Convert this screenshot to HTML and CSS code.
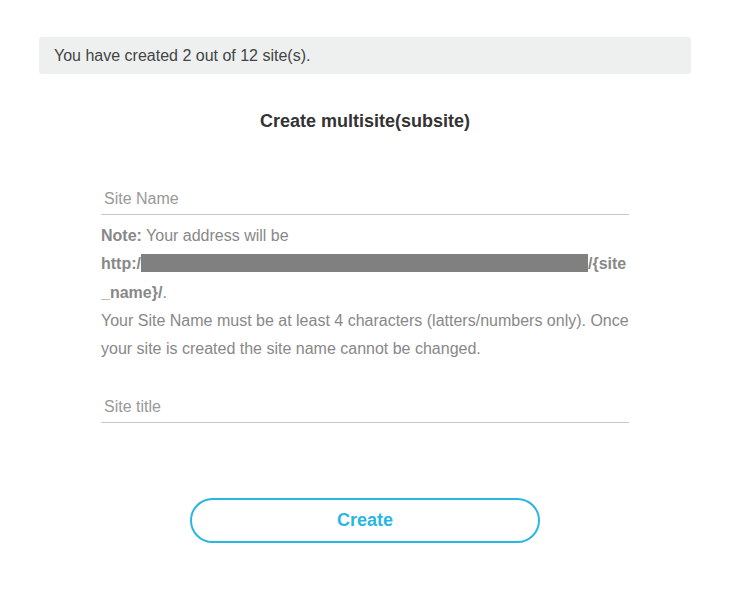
FILE: index.html
```html
<!DOCTYPE html>
<html>
<head>
<meta charset="utf-8">
<link rel="stylesheet" href="styles.css">
</head>
<body>
<div class="page">
  <div class="notice">You have created 2 out of 12 site(s).</div>
  <h2 class="title">Create multisite(subsite)</h2>
  <form class="form">
    <div class="field">
      <input class="input" type="text" placeholder="Site Name">
    </div>
    <div class="note">
      <p><b>Note:</b> Your address will be</p>
      <p><b>http:/<span class="redact"></span>/{site<br>_name}/</b>.</p>
      <p>Your Site Name must be at least 4 characters (latters/numbers only). Once your site is created the site name cannot be changed.</p>
    </div>
    <div class="field field-title">
      <input class="input" type="text" placeholder="Site title">
    </div>
    <div class="actions">
      <button class="btn" type="button">Create</button>
    </div>
  </form>
</div>
</body>
</html>
```
FILE: styles.css
```css
html, body {
  margin: 0;
  padding: 0;
  background: #fff;
  font-family: "Liberation Sans", Arial, sans-serif;
}
body {
  padding: 0 40px 0 39px;
}
.page {
  width: 652px;
  margin-top: 37px;
}
.notice {
  background: #eef0f0;
  border-radius: 3px;
  height: 37px;
  line-height: 37px;
  padding-left: 15px;
  font-size: 16px;
  color: #444;
}
.title {
  margin: 36px 0 0;
  text-align: center;
  font-size: 18px;
  line-height: 22px;
  font-weight: bold;
  color: #333;
}
.form {
  width: 528px;
  margin: 0 auto;
}
.field {
  margin-top: 49px;
}
.field-title {
  margin-top: 26px;
}
.input {
  display: block;
  box-sizing: border-box;
  width: 100%;
  height: 34px;
  border: 0;
  border-bottom: 1px solid #c8c8c8;
  padding: 2px 3px 0;
  font-family: "Liberation Sans", Arial, sans-serif;
  font-size: 16px;
  color: #555;
  outline: none;
  background: transparent;
}
.input::placeholder {
  color: #999;
}
.note {
  margin-top: 7px;
  font-size: 16px;
  line-height: 28.3px;
  color: #888;
}
.note p {
  margin: 0;
}
.note b {
  color: #888;
}
.redact {
  display: inline-block;
  width: 447px;
  height: 18px;
  background: #808080;
  vertical-align: -3px;
}
.actions {
  display: flex;
  justify-content: center;
  margin-top: 75px;
}
.btn {
  width: 350px;
  height: 45px;
  border: 2px solid #29b6e3;
  border-radius: 23px;
  background: #fff;
  color: #29b6e3;
  font-family: "Liberation Sans", Arial, sans-serif;
  font-size: 18px;
  font-weight: bold;
  cursor: pointer;
}
```
